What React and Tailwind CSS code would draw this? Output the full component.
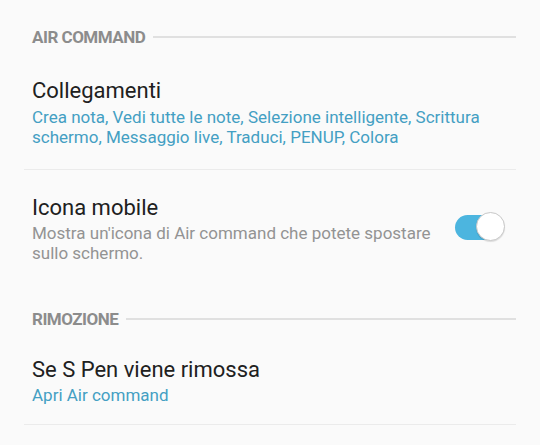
import React from 'react';

const font = { fontFamily: 'Roboto, "Noto Sans", sans-serif' };

const SectionHeader = ({ label }) => (
  <div className="flex items-center gap-[8px] pl-[32px] pr-[24px]">
    <span className="text-[17px] leading-[20px] font-bold text-[#8c8c8c] tracking-[-0.5px]">{label}</span>
    <div className="h-[2px] flex-1 bg-[#e0e0e0]" />
  </div>
);

const Toggle = ({ on }) => (
  <div className="relative mb-[4px] h-[30px] w-[50px] shrink-0">
    <div className={`absolute left-0 top-[3px] h-[25px] w-[46px] rounded-full ${on ? 'bg-[#4cb5df]' : 'bg-[#bdbdbd]'}`} />
    <div className="absolute right-0 top-0 h-[29px] w-[29px] rounded-full border border-[#c8c8c8] bg-white shadow-[0_1px_1px_rgba(0,0,0,0.12)]" />
  </div>
);

export default function App() {
  return (
    <div className="h-[445px] w-[540px] overflow-hidden bg-[#fafafa]" style={font}>
      <div className="pt-[27px]">
        <SectionHeader label="AIR COMMAND" />
      </div>

      {/* Collegamenti */}
      <div className="pl-[32px] pr-[40px] pt-[31px] pb-[22px]">
        <div className="text-[22px] leading-[26px] text-[#202020]">Collegamenti</div>
        <div className="mt-[4px] text-[17px] leading-[19.5px] text-[#449fc3]">
          Crea nota, Vedi tutte le note, Selezione intelligente, Scrittura schermo, Messaggio live, Traduci, PENUP, Colora
        </div>
      </div>
      <div className="mx-[24px] h-px bg-[#ebebeb]" />

      {/* Icona mobile */}
      <div className="flex items-center pl-[32px] pr-[35px] pt-[25px]">
        <div className="flex-1 pr-[20px]">
          <div className="text-[22px] leading-[26px] text-[#202020]">Icona mobile</div>
          <div className="mt-[3px] text-[17px] leading-[19.5px] text-[#939393]">
            Mostra un'icona di Air command che potete spostare sullo schermo.
          </div>
        </div>
        <Toggle on />
      </div>

      <div className="pt-[46px]">
        <SectionHeader label="RIMOZIONE" />
      </div>

      {/* Se S Pen viene rimossa */}
      <div className="pl-[32px] pr-[40px] pt-[28px] pb-[18px]">
        <div className="text-[22px] leading-[26px] text-[#202020]">Se S Pen viene rimossa</div>
        <div className="mt-[3px] text-[17px] leading-[19.5px] text-[#449fc3]">Apri Air command</div>
      </div>
      <div className="mx-[24px] h-px bg-[#ebebeb]" />
    </div>
  );
}
